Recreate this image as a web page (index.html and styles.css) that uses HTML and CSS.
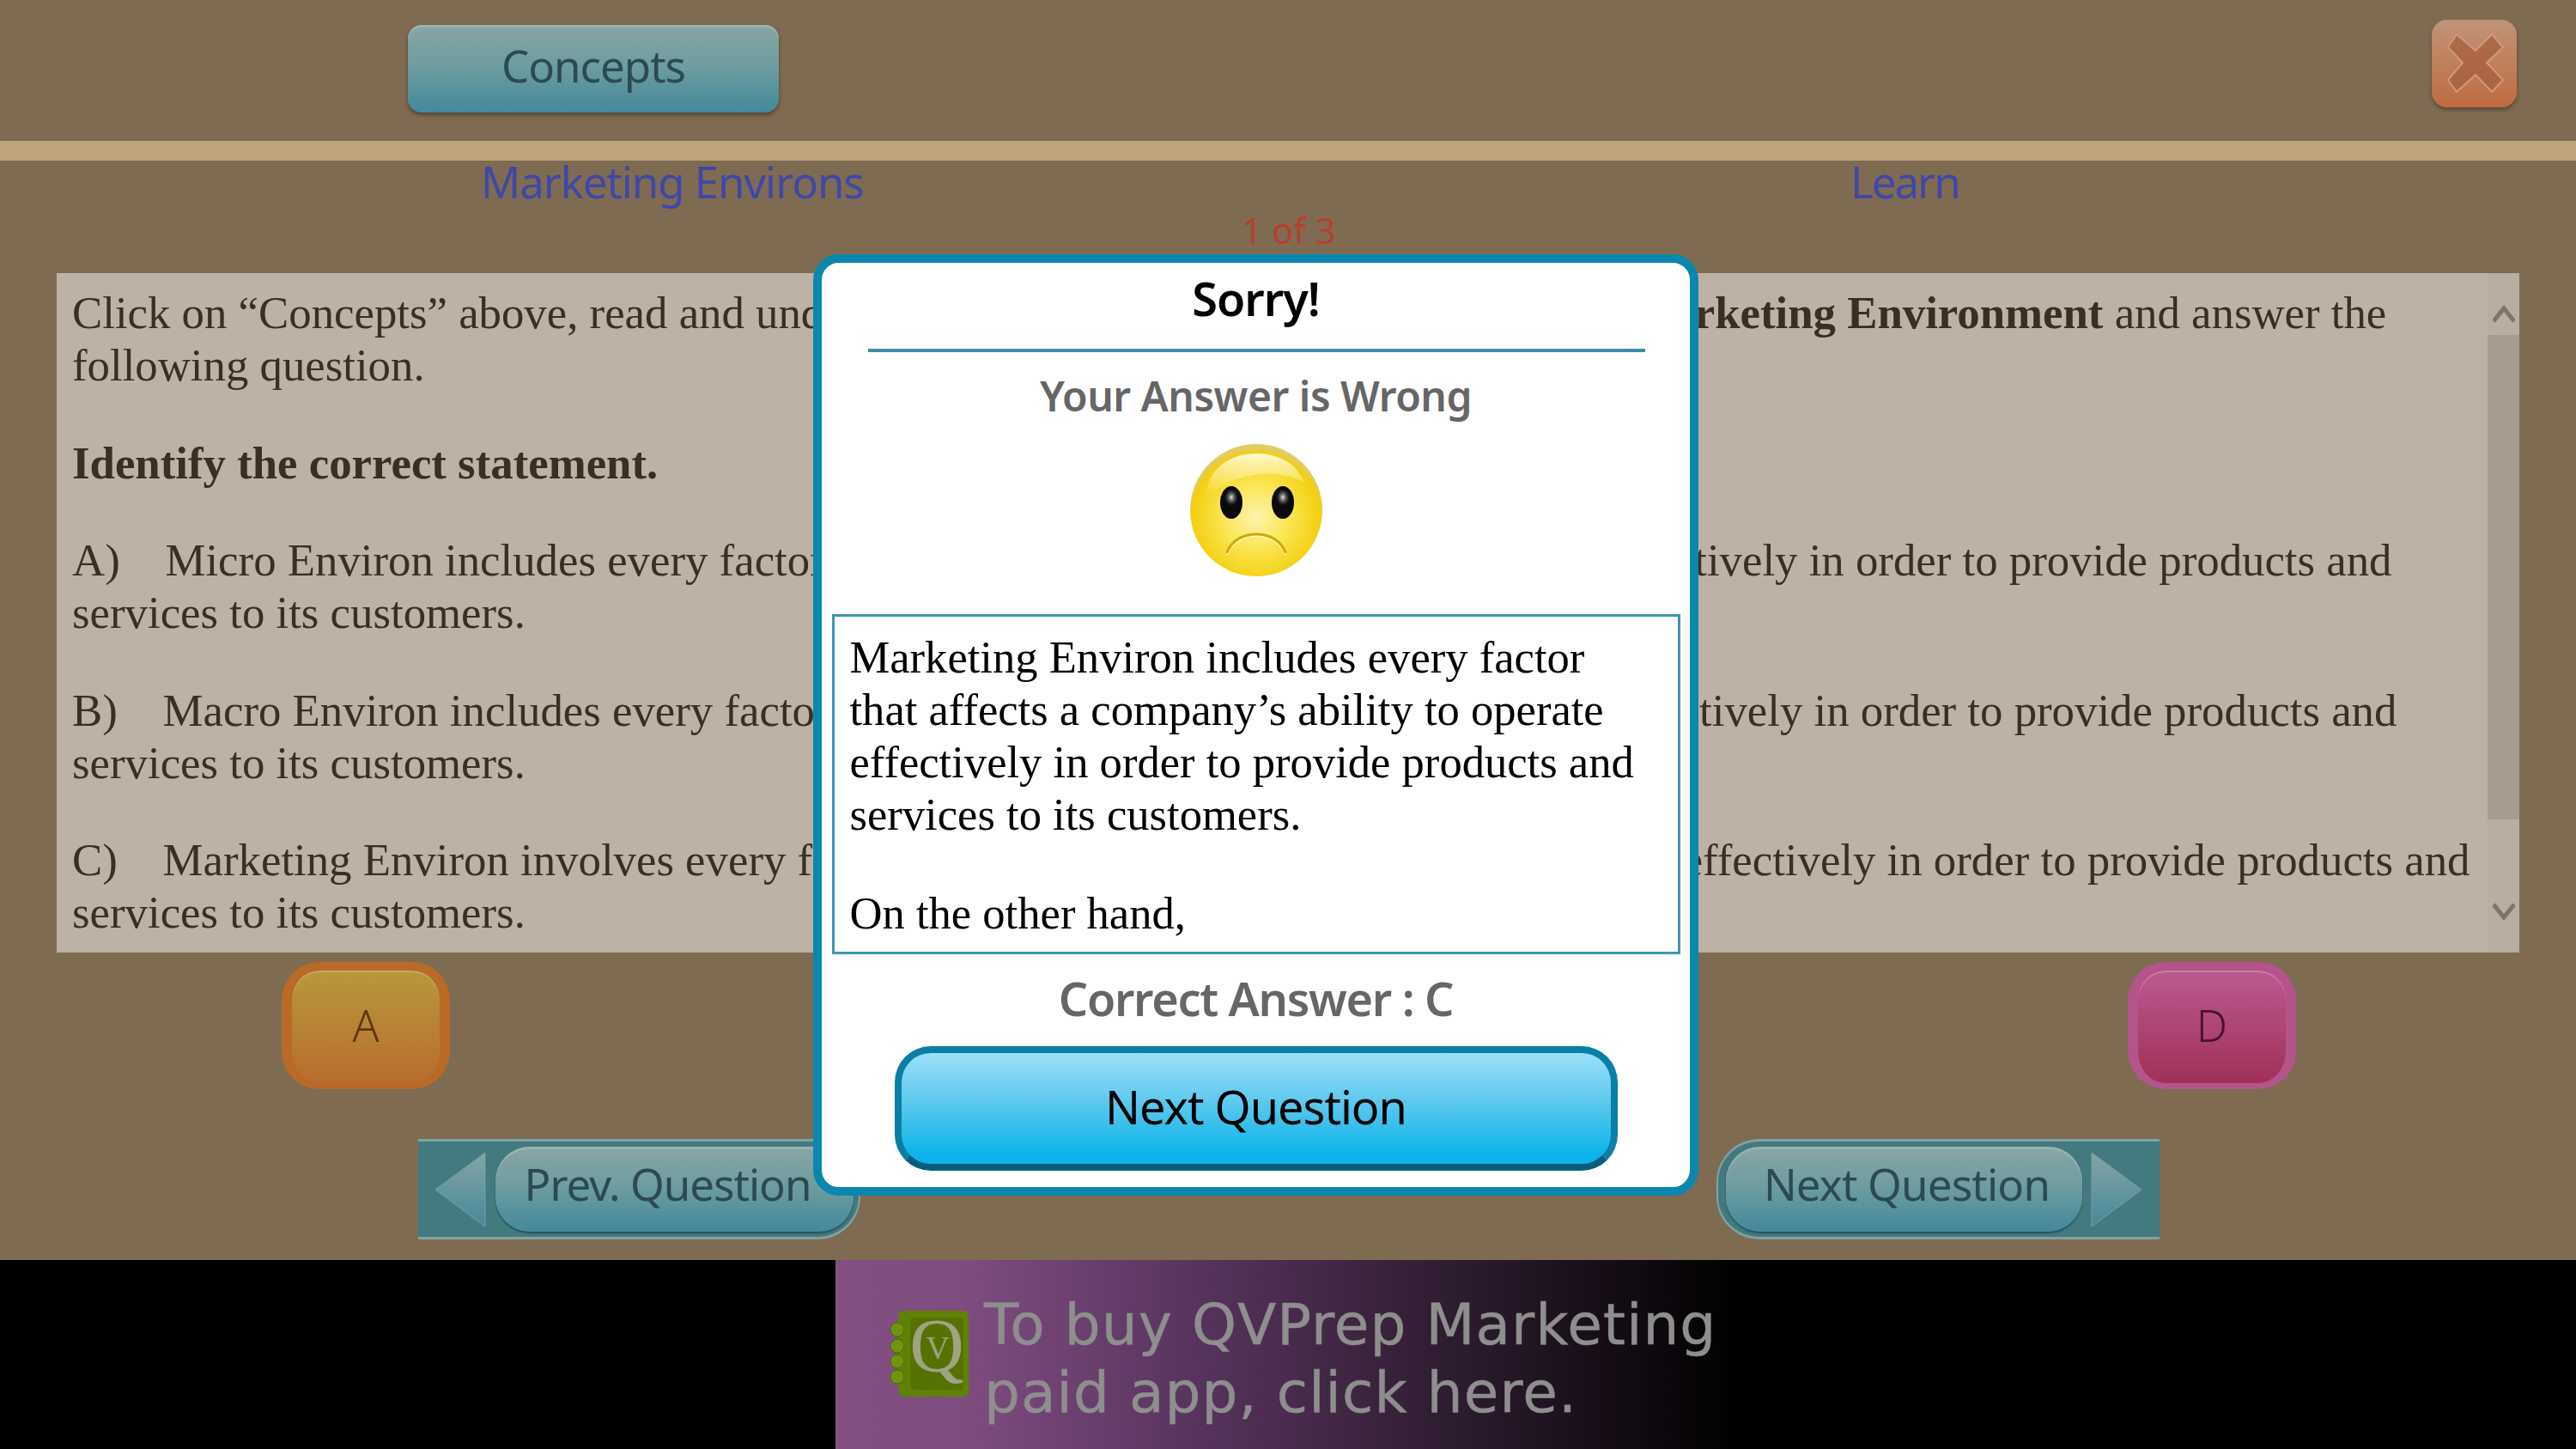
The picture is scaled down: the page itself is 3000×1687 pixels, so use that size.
FILE: index.html
```html
<!DOCTYPE html>
<html lang="en">
<head>
<meta charset="utf-8">
<title>QVPrep Marketing</title>
<link rel="stylesheet" href="styles.css">
</head>
<body>
<svg class="defs" width="0" height="0" aria-hidden="true">
  <defs>
    <linearGradient id="teal" x1="0" y1="0" x2="0" y2="1"><stop offset="0" stop-color="#86a4a3"/><stop offset="1" stop-color="#43899c"/></linearGradient>
    <linearGradient id="xfill" x1="0" y1="0" x2="0" y2="1"><stop offset="0" stop-color="#ad6a4c"/><stop offset="1" stop-color="#ae6342"/></linearGradient>
    <radialGradient id="face" cx="0.5" cy="0.55" r="0.52"><stop offset="0" stop-color="#fdf3b0"/><stop offset="0.5" stop-color="#fbe54f"/><stop offset="0.93" stop-color="#f3cf10"/><stop offset="1" stop-color="#e2cc62"/></radialGradient>
    <linearGradient id="gloss" x1="0" y1="0" x2="0" y2="1"><stop offset="0" stop-color="#fffbe0" stop-opacity="0.95"/><stop offset="1" stop-color="#fff7b0" stop-opacity="0"/></linearGradient>
    <radialGradient id="shine" cx="0.5" cy="0.5" r="0.5"><stop offset="0" stop-color="#e6e6e6"/><stop offset="1" stop-color="#555" stop-opacity="0"/></radialGradient>
  </defs>
</svg>
<div class="app">
  <header class="topbar">
    <button class="btn teal concepts">Concepts</button>
    <button class="close" aria-label="Close">
      <svg viewBox="0 0 99 102" width="99" height="102"><path d="M29 17 L51 36 L70 17 L83 32 L64 50 L83 70 L70 84 L51 64 L29 84 L19 70 L36 50 L19 32 Z" fill="url(#xfill)" stroke="#cf9a7c" stroke-width="2" stroke-linejoin="round"/></svg>
    </button>
  </header>
  <div class="stripe"></div>
  <div class="titles">
    <span class="title-left">Marketing Environs</span>
    <span class="title-right">Learn</span>
    <span class="counter">1 of 3</span>
  </div>
  <section class="panel">
    <div class="panel-text">
      <p>Click on “Concepts” above, read and understand the concepts related to the course of <b>Marketing Environment</b> and answer the<br>following question.</p>
      <p><b>Identify the correct statement.</b></p>
      <p>A)&nbsp;&nbsp;&nbsp;&nbsp;Micro Environ includes every factor that affects a company’s ability to operate effectively in order to provide products and<br>services to its customers.</p>
      <p>B)&nbsp;&nbsp;&nbsp;&nbsp;Macro Environ includes every factor that affects a company’s ability to operate effectively in order to provide products and<br>services to its customers.</p>
      <p>C)&nbsp;&nbsp;&nbsp;&nbsp;Marketing Environ involves every factor that affects a company’s ability to operate effectively in order to provide products and<br>services to its customers.</p>
    </div>
    <div class="scrollbar">
      <div class="scroll-btn"><svg viewBox="0 0 26 21" width="26" height="21"><path d="M1 19 L13 4 L25 19" fill="none" stroke="#7f7468" stroke-width="5"/></svg></div>
      <div class="scroll-thumb"></div>
      <div class="scroll-rest"><svg viewBox="0 0 26 21" width="26" height="21"><path d="M1 2 L13 17 L25 2" fill="none" stroke="#7f7468" stroke-width="5"/></svg></div>
    </div>
  </section>
  <div class="answers">
    <button class="answer orange">A</button>
    <button class="answer">B</button>
    <button class="answer">C</button>
    <button class="answer pink">D</button>
  </div>
  <nav class="nav">
    <div class="nav-bar prev">
      <svg class="tri" viewBox="0 0 60 88" width="60" height="88"><path d="M59 1 V87 L1 44 Z" fill="url(#teal)" stroke="#78a0a2" stroke-width="1"/></svg>
      <button class="btn teal nav-btn">Prev. Question</button>
    </div>
    <div class="nav-bar next">
      <button class="btn teal nav-btn">Next Question</button>
      <svg class="tri" viewBox="0 0 60 88" width="60" height="88"><path d="M1 1 V87 L59 44 Z" fill="url(#teal)" stroke="#78a0a2" stroke-width="1"/></svg>
    </div>
  </nav>
</div>
<footer class="adbar">
  <a class="ad">
    <svg class="ad-icon" viewBox="0 0 92 100" width="92" height="100">
      <rect x="10" y="0" width="82" height="100" rx="6" fill="#5f8205"/>
      <rect x="24" y="8" width="62" height="84" rx="4" fill="#557203"/>
      <g fill="#6f9410" stroke="#4d6a02" stroke-width="1"><circle cx="9" cy="22" r="8"/><circle cx="9" cy="41" r="8"/><circle cx="9" cy="59" r="8"/><circle cx="9" cy="77" r="8"/></g>
      <text class="ad-q" x="55" y="70" text-anchor="middle">Q</text>
      <text class="ad-v" x="56" y="56" text-anchor="middle">V</text>
    </svg>
    <span class="ad-text">To buy QVPrep Marketing<br>paid app, click here.</span>
  </a>
</footer>
<div class="modal" role="dialog">
  <h2 class="modal-title">Sorry!</h2>
  <div class="divider"></div>
  <div class="modal-sub">Your Answer is Wrong</div>
  <svg class="smiley" viewBox="0 0 156 156" width="156" height="156">
    <circle cx="78" cy="78" r="77" fill="url(#face)"/>
    <path d="M20 62 C20 30 48 12 78 12 C104 12 126 24 134 46 C105 30 60 30 20 62 Z" fill="url(#gloss)"/>
    <ellipse cx="49" cy="69" rx="13" ry="19" fill="#0a0a0a"/>
    <ellipse cx="109" cy="69" rx="13" ry="19" fill="#0a0a0a"/>
    <ellipse cx="49" cy="63" rx="8" ry="10" fill="url(#shine)"/>
    <ellipse cx="109" cy="63" rx="8" ry="10" fill="url(#shine)"/>
    <path d="M44 129 C50 114 64 108 78 108 C92 108 106 114 112 129" fill="none" stroke="#fff6b0" stroke-width="2.500" stroke-linecap="round"/>
    <path d="M44 127 C50 112 64 106 78 106 C92 106 106 112 112 127" fill="none" stroke="#cfa90e" stroke-width="3" stroke-linecap="round"/>
  </svg>
  <div class="explain">
    <p>Marketing Environ includes every factor<br>that affects a company’s ability to operate<br>effectively in order to provide products and<br>services to its customers.</p>
    <p>On the other hand,</p>
  </div>
  <div class="correct">Correct Answer : C</div>
  <button class="next-big">Next Question</button>
</div>
</body>
</html>
```
FILE: styles.css
```css
* { box-sizing: border-box; }
html, body { margin: 0; padding: 0; }
body {
  position: relative;
  width: 3000px;
  height: 1687px;
  overflow: hidden;
  background: #000;
  font-family: "Noto Sans", "Open Sans", sans-serif;
}
.defs { position: absolute; }
button { font-family: inherit; padding: 0; cursor: pointer; }

.app {
  height: 1467px;
  background: #7f6b52;
  display: flex;
  flex-direction: column;
}

.topbar {
  height: 164px;
  padding: 23px 69px 0 475px;
  display: flex;
  justify-content: space-between;
  align-items: flex-start;
}
.btn.teal {
  border: 0;
  background: linear-gradient(#89a5a3 0%, #6f9da0 45%, #43899c 100%);
  color: #2b4a52;
  letter-spacing: -1px;
}
.concepts {
  width: 432px;
  height: 102px;
  margin-top: 6px;
  padding-bottom: 8px;
  border-radius: 16px;
  font-size: 51px;
  box-shadow: 0 3px 4px rgba(50, 40, 30, 0.6), inset 0 3px 1px rgba(170, 195, 192, 0.5);
}
.close {
  width: 99px;
  height: 102px;
  border: 0;
  border-radius: 18px;
  background: linear-gradient(#c09479 0%, #bf6b40 100%);
  box-shadow: 0 3px 4px rgba(50, 40, 30, 0.5);
  display: block;
}
.close svg { display: block; }

.stripe { height: 23px; background: #bda479; }

.titles {
  height: 131px;
  padding: 4px 0 0 560px;
  display: grid;
  grid-template-columns: 1595px auto;
  grid-template-rows: 40px auto;
  font-size: 51px;
  line-height: 40px;
  color: #3f48a8;
  letter-spacing: -1.1px;
}
.title-right { letter-spacing: -2px; }
.counter {
  grid-column: 1 / -1;
  justify-self: start;
  margin: 17px 0 0 886px;
  font-size: 42px;
  line-height: 40px;
  color: #b5402c;
  letter-spacing: 0;
}

.panel {
  flex: none;
  height: 791px;
  margin: 0 66px;
  display: flex;
  background: #bdb2a5;
}
.panel-text {
  flex: 1;
  min-width: 0;
  overflow: hidden;
  padding: 16px 0 0 18px;
  font-family: "Liberation Serif", "Times New Roman", serif;
  font-size: 52.8px;
  line-height: 61px;
  color: #3a2f24;
  white-space: nowrap;
}
.panel-text p { margin: 0 0 52.6px; }

.scrollbar {
  width: 37px;
  display: flex;
  flex-direction: column;
  background: #b8aea1;
}
.scroll-btn { height: 72px; display: flex; align-items: flex-start; justify-content: center; padding-top: 37px; }
.scroll-thumb { height: 564px; background: #a69c8f; }
.scroll-rest { flex: 1; display: flex; align-items: flex-end; justify-content: center; padding-bottom: 37px; }

.answers {
  height: 148px;
  margin-top: 11px;
  padding: 0 326px 0 328px;
  display: flex;
  justify-content: space-between;
}
.answer {
  width: 196px;
  height: 148px;
  padding-bottom: 6px;
  border-radius: 44px;
  border-style: solid;
  border-width: 10px 12px 7px;
  border-color: #b96a26;
  font-size: 51px;
  font-weight: 300;
  background: #b96a26;
}
.answer.orange {
  background: linear-gradient(#b8983c, #b96c2e);
  color: #5a3610;
  border-color: #b96a26;
  box-shadow: inset 0 2px 0 rgba(200, 175, 120, 0.7);
}
.answer.pink {
  background: linear-gradient(#bb5a90, #a03058);
  color: #4a1030;
  border-color: #b3558a;
  box-shadow: inset 0 2px 0 rgba(215, 140, 180, 0.7);
}

.nav {
  height: 117px;
  margin-top: 58px;
  padding: 0 485px 0 487px;
  display: flex;
  justify-content: space-between;
}
.nav-bar {
  width: 515px;
  height: 117px;
  padding: 7px 0;
  display: flex;
  align-items: center;
  background: #437a80;
  border-top: 3px solid #7fa3a3;
  border-bottom: 3px solid #7fa3a3;
}
.nav-bar.prev { border-radius: 0 50px 50px 0; padding: 7px 6px 7px 19px; gap: 11px; border-right: 2px solid #7fa3a3; }
.nav-bar.next { border-radius: 50px 0 0 50px; padding: 7px 20px 7px 9px; gap: 10px; width: 516px; border-left: 2px solid #7fa3a3; }
.tri { flex: none; display: block; }
.nav-btn {
  flex: 1;
  height: 99px;
  padding-bottom: 14px;
  border-radius: 40px;
  font-size: 51px;
  box-shadow: 0 2px 2px rgba(30, 60, 65, 0.7), inset 0 3px 1px rgba(170, 195, 192, 0.5);
}
.prev .nav-btn { padding-right: 16px; }
.next .nav-btn { padding-left: 6px; letter-spacing: -0.8px; }

.adbar { height: 220px; background: #000; display: flex; justify-content: center; }
.ad {
  width: 1054px;
  height: 220px;
  padding: 36px 0 0 63px;
  display: flex;
  align-items: flex-start;
  gap: 18px;
  background: linear-gradient(90deg, #834f83 0%, #7f4c80 14%, #5a3560 38%, #2e1c30 68%, #000 100%);
}
.ad-icon { flex: none; display: block; margin-top: 23px; }
.ad-q { font-family: "Liberation Serif", serif; font-size: 88px; fill: #b0b0a0; fill-opacity: 0.8; }
.ad-v { font-family: "Liberation Serif", serif; font-size: 38px; fill: #b0b0a0; fill-opacity: 0.8; }
.ad-text {
  font-family: "DejaVu Sans", sans-serif;
  font-size: 66px;
  line-height: 79px;
  letter-spacing: 1.1px;
  color: #8e8e8e;
  white-space: nowrap;
  -webkit-text-stroke: 0.5px #8e8e8e;
}

.modal {
  position: absolute;
  left: 947px;
  top: 296px;
  width: 1031px;
  height: 1096px;
  border: 10px solid #0b87ae;
  border-radius: 30px;
  background: #fff;
  display: flex;
  flex-direction: column;
  align-items: center;
}
.modal-title {
  margin: 3px 0 0;
  font-size: 54px;
  line-height: 76px;
  font-weight: 600;
  color: #000;
  letter-spacing: -1px;
}
.divider { width: 905px; height: 4px; margin: 21px 0 0 2px; background: #3b8fa9; flex: none; }
.modal-sub {
  margin-top: 19px;
  font-size: 48px;
  line-height: 64px;
  font-weight: 600;
  color: #666;
  letter-spacing: -0.5px;
}
.smiley { flex: none; display: block; margin-top: 23px; }
.explain {
  flex: none;
  width: 988px;
  height: 396px;
  margin-top: 43px;
  padding: 17px 0 0 18px;
  border: 3px solid #3f97b1;
  overflow: hidden;
  font-family: "Liberation Serif", "Times New Roman", serif;
  font-size: 52.6px;
  line-height: 61px;
  color: #000;
  white-space: nowrap;
}
.explain p { margin: 0 0 54px; }
.correct {
  margin-top: 15px;
  font-size: 54px;
  line-height: 72px;
  font-weight: 600;
  color: #666;
  letter-spacing: -1.3px;
}
.next-big {
  flex: none;
  width: 842px;
  height: 145px;
  margin-top: 20px;
  padding-bottom: 6px;
  border: 8px solid #0a7fa5;
  border-bottom-color: #075e7c;
  border-radius: 42px;
  background: linear-gradient(#9be0f7 0%, #5cc8ee 45%, #0db4e9 90%);
  color: #000;
  font-size: 54px;
  letter-spacing: -1px;
}
```
